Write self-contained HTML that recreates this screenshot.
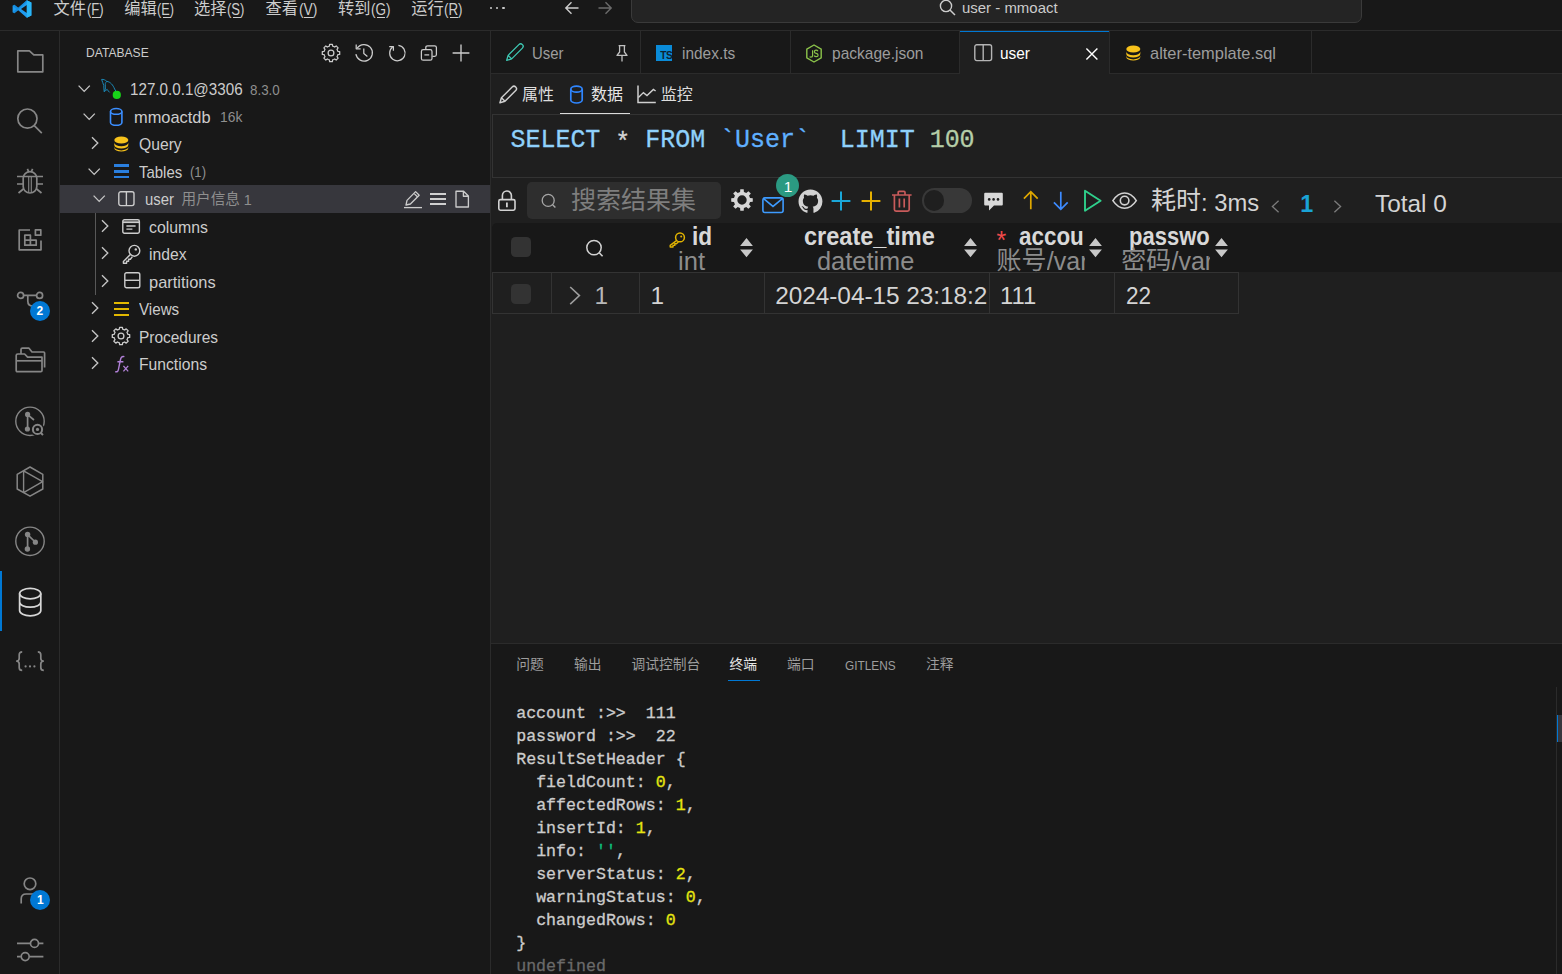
<!DOCTYPE html>
<html lang="zh-CN"><head><meta charset="utf-8"><title>user - mmoact - Visual Studio Code</title><style>
html,body{margin:0;padding:0;background:#181818;}
body{width:1562px;height:974px;overflow:hidden;position:relative;font-family:"Liberation Sans",sans-serif;color:#ccc;}
.t{position:absolute;white-space:pre;display:block;transform-origin:0 0;}
.m{font-family:"Liberation Mono",monospace;-webkit-text-stroke:.3px;}
.c{position:absolute;display:block;line-height:0;white-space:pre;font-family:"Liberation Sans","Noto Sans CJK SC",sans-serif;}
.r{position:absolute;}
.i{position:absolute;overflow:visible;}
</style></head><body>
<div class="r" style="left:0px;top:0px;width:1562px;height:30px;background:#181818;"></div>
<div class="r" style="left:0px;top:30px;width:1562px;height:1px;background:#2b2b2b;"></div>
<div class="r" style="left:0px;top:31px;width:59px;height:943px;background:#181818;"></div>
<div class="r" style="left:59px;top:31px;width:1px;height:943px;background:#2b2b2b;"></div>
<div class="r" style="left:60px;top:31px;width:430px;height:943px;background:#181818;"></div>
<div class="r" style="left:490px;top:31px;width:1px;height:943px;background:#2b2b2b;"></div>
<div class="r" style="left:491px;top:31px;width:1071px;height:42px;background:#181818;"></div>
<div class="r" style="left:491px;top:73px;width:1071px;height:1px;background:#2b2b2b;"></div>
<div class="r" style="left:491px;top:74px;width:1071px;height:569px;background:#1f1f1f;"></div>
<div class="r" style="left:491px;top:643px;width:1071px;height:1px;background:#2b2b2b;"></div>
<div class="r" style="left:491px;top:644px;width:1071px;height:330px;background:#181818;"></div>
<svg class="i" style="left:12px;top:-1.5px;" width="20" height="20" viewBox="0 0 20 20"><path d="M74 6 L97 17 V83 L74 94 L31 56 L12 71 L3 66 V34 L12 29 L31 44 Z M74 30 L45 50 L74 70 Z" transform="scale(.2)" fill="#1f9cf0"/>
<path d="M74 6 L97 17 V83 L74 94 Z" transform="scale(.2)" fill="#29b6f6"/>
<path d="M3 66 L12 71 L74 14 L74 6 L31 44 L12 29 L3 34 L22 50 Z" transform="scale(.2)" fill="#0d7fd0" opacity=".55"/></svg>
<span class="c" style="left:53.5px;top:-0.1px;font-size:16.25px;line-height:16.25px;color:#cccccc;">文件</span>
<span class="t " id="t1" style="left:86.5px;top:-1.63px;font-size:16.25px;line-height:22px;color:#cccccc;transform:scaleX(0.8048);">(F)</span>
<div class="r" style="left:92px;top:17.2px;width:8.5px;height:1px;background:#cccccc;"></div>
<span class="c" style="left:124.2px;top:-0.1px;font-size:16.25px;line-height:16.25px;color:#cccccc;">编辑</span>
<span class="t " id="t2" style="left:157.2px;top:-1.63px;font-size:16.25px;line-height:22px;color:#cccccc;transform:scaleX(0.7798);">(E)</span>
<div class="r" style="left:162.7px;top:17.2px;width:8.5px;height:1px;background:#cccccc;"></div>
<span class="c" style="left:194.1px;top:-0.1px;font-size:16.25px;line-height:16.25px;color:#cccccc;">选择</span>
<span class="t " id="t3" style="left:227.1px;top:-1.63px;font-size:16.25px;line-height:22px;color:#cccccc;transform:scaleX(0.8075);">(S)</span>
<div class="r" style="left:232.6px;top:17.2px;width:8.5px;height:1px;background:#cccccc;"></div>
<span class="c" style="left:265.6px;top:-0.1px;font-size:16.25px;line-height:16.25px;color:#cccccc;">查看</span>
<span class="t " id="t4" style="left:298.6px;top:-1.63px;font-size:16.25px;line-height:22px;color:#cccccc;transform:scaleX(0.8490);">(V)</span>
<div class="r" style="left:304.1px;top:17.2px;width:8.5px;height:1px;background:#cccccc;"></div>
<span class="c" style="left:338px;top:-0.1px;font-size:16.25px;line-height:16.25px;color:#cccccc;">转到</span>
<span class="t " id="t5" style="left:371px;top:-1.63px;font-size:16.25px;line-height:22px;color:#cccccc;transform:scaleX(0.8309);">(G)</span>
<div class="r" style="left:376.5px;top:17.2px;width:8.5px;height:1px;background:#cccccc;"></div>
<span class="c" style="left:411.2px;top:-0.1px;font-size:16.25px;line-height:16.25px;color:#cccccc;">运行</span>
<span class="t " id="t6" style="left:444.2px;top:-1.63px;font-size:16.25px;line-height:22px;color:#cccccc;transform:scaleX(0.8199);">(R)</span>
<div class="r" style="left:449.7px;top:17.2px;width:8.5px;height:1px;background:#cccccc;"></div>
<div class="r" style="left:490px;top:6.8px;width:2.2px;height:2.2px;background:#cccccc;border-radius:50%"></div>
<div class="r" style="left:496.2px;top:6.8px;width:2.2px;height:2.2px;background:#cccccc;border-radius:50%"></div>
<div class="r" style="left:502.4px;top:6.8px;width:2.2px;height:2.2px;background:#cccccc;border-radius:50%"></div>
<svg class="i" style="left:562px;top:-2px;" width="20" height="20" viewBox="0 0 20 20"><path d="M16.5 10 H4 M9.5 4.2 L3.8 10 L9.5 15.8" fill="none" stroke="#cccccc" stroke-width="1.4"/></svg>
<svg class="i" style="left:594.5px;top:-2px;" width="20" height="20" viewBox="0 0 20 20"><path d="M3.5 10 H16 M10.5 4.2 L16.2 10 L10.5 15.8" fill="none" stroke="#6b6b6b" stroke-width="1.4"/></svg>
<div class="r" style="left:630.5px;top:-8px;width:731px;height:30.5px;background:#242424;border:1px solid #3a3a3a;border-radius:7px;box-sizing:border-box"></div>
<svg class="i" style="left:937px;top:-3px;" width="20" height="20" viewBox="0 0 20 20"><circle cx="9" cy="9" r="5.6" fill="none" stroke="#cccccc" stroke-width="1.4"/><path d="M13 13 L18 18" stroke="#cccccc" stroke-width="1.5"/></svg>
<span class="t " id="t7" style="left:962.3px;top:-1.6px;font-size:15px;line-height:20px;color:#cccccc;transform:scaleX(0.9973);">user - mmoact</span>
<svg class="i" style="left:15px;top:45.5px;" width="30" height="30" viewBox="0 0 30 30"><g fill="none" stroke="#868686" stroke-width="1.7" stroke-linejoin="round" stroke-linecap="butt"><path d="M2.8 4.9 H14.4 L18.8 8.9 H27.8 V25.8 H2.8 Z"/></g></svg>
<svg class="i" style="left:15px;top:105.5px;" width="30" height="30" viewBox="0 0 30 30"><g fill="none" stroke="#868686" stroke-width="1.7" stroke-linejoin="round" stroke-linecap="butt"><circle cx="12.4" cy="12.6" r="9.6"/><path d="M19.3 19.6 L26.8 27.2"/></g></svg>
<svg class="i" style="left:15px;top:165.5px;" width="30" height="30" viewBox="0 0 30 30"><g fill="none" stroke="#868686" stroke-width="1.7" stroke-linejoin="round" stroke-linecap="butt"><path d="M8.2 12 a6.8 6.3 0 0 1 13.6 0 V20.5 a6.8 6.5 0 0 1 -13.6 0 Z"/><path d="M13.7 11 V26.6 M16.3 11 V26.6" stroke-width="1.1"/><path d="M2 10.5 H28 M2 18 H8 M22 18 H28 M3.5 27 L9 22.5 M26.5 27 L21 22.5 M12.4 2.8 L13.8 6 M17.6 2.8 L16.2 6"/></g></svg>
<svg class="i" style="left:15px;top:224.3px;" width="30" height="30" viewBox="0 0 30 30"><g fill="none" stroke="#868686" stroke-width="1.7" stroke-linejoin="round" stroke-linecap="butt"><path d="M15 6 H4.2 V25.8 H26 V16.4"/><path d="M9.8 11.2 H15.4 V21.2 H9.8 Z M9.8 16.2 H21.2 V21.2 H15.4"/><path d="M20.4 5.8 H25.8 V11.2 H20.4 Z"/></g></svg>
<svg class="i" style="left:15px;top:284.5px;" width="30" height="30" viewBox="0 0 30 30"><g fill="none" stroke="#868686" stroke-width="1.7" stroke-linejoin="round" stroke-linecap="butt"><circle cx="5.6" cy="10.4" r="3"/><circle cx="24.6" cy="10.4" r="3"/><path d="M8.6 10.4 H21.6 M12.8 10.4 V16 q0 5 5 5"/></g></svg>
<div class="r" style="left:30px;top:301px;width:20px;height:20px;background:#0078d4;border-radius:50%"></div>
<span class="t " id="t8" style="left:36.6px;top:303.24px;font-size:12px;line-height:16px;color:#ffffff;font-weight:700;">2</span>
<svg class="i" style="left:15px;top:344.1px;" width="30" height="30" viewBox="0 0 30 30"><g fill="none" stroke="#868686" stroke-width="1.7" stroke-linejoin="round" stroke-linecap="butt"><path d="M1.2 11.6 q0 -1.6 1.6 -1.6 H9.6 L12.6 13.2 H27 V26.4 q0 1.2 -1.2 1.2 H2.4 q-1.2 0 -1.2 -1.2 Z"/><path d="M1.2 16.8 H27"/><path d="M6 10 V5.6 q0 -1.4 1.4 -1.4 H14 L17 8 H28.6 q1 0 1 1 V23.6"/></g></svg>
<svg class="i" style="left:15px;top:405.5px;" width="30" height="30" viewBox="0 0 30 30"><g fill="none" stroke="#868686" stroke-width="1.7" stroke-linejoin="round" stroke-linecap="butt"><circle cx="15" cy="15.3" r="14.2" stroke-width="1.4"/><path d="M12.6 8.6 V23 M12.6 8.6 L19 14"/><circle cx="12.6" cy="8.4" r="2.6" fill="#868686" stroke="none"/><circle cx="12.4" cy="23" r="2.6" fill="#868686" stroke="none"/><circle cx="22.5" cy="23.4" r="7" fill="#181818" stroke="none"/><circle cx="22.5" cy="23.4" r="4.6" stroke-width="2"/><circle cx="22.5" cy="23.4" r="1.6" fill="#868686" stroke="none"/><path d="M25.6 26.8 L28 29" stroke-width="2"/></g></svg>
<svg class="i" style="left:15px;top:465.5px;" width="30" height="30" viewBox="0 0 30 30"><g fill="none" stroke="#868686" stroke-width="1.7" stroke-linejoin="round" stroke-linecap="butt"><path d="M15 1 L27.8 8.4 V23 L15 30.2 L2.2 23 V8.4 Z" stroke-width="1.5"/><path d="M8.6 5 V26.4 M8.6 4.8 L27.6 15.6 L8.6 26.6" stroke-width="1.4"/></g></svg>
<svg class="i" style="left:15px;top:525.5px;" width="30" height="30" viewBox="0 0 30 30"><g fill="none" stroke="#868686" stroke-width="1.7" stroke-linejoin="round" stroke-linecap="butt"><circle cx="15" cy="15.3" r="14.2" stroke-width="1.4"/><path d="M12.6 8.6 V23 M12.6 8.6 L20.2 16"/><circle cx="12.6" cy="8.4" r="2.7" fill="#868686" stroke="none"/><circle cx="12.4" cy="23" r="2.7" fill="#868686" stroke="none"/><circle cx="20.4" cy="16.2" r="2.6" fill="#868686" stroke="none"/></g></svg>
<div class="r" style="left:0px;top:570.5px;width:2.1px;height:60px;background:#0078d4;"></div>
<svg class="i" style="left:15px;top:585.5px;" width="30" height="30" viewBox="0 0 30 30"><g fill="none" stroke="#d7d7d7" stroke-width="1.7" stroke-linejoin="round" stroke-linecap="butt"><ellipse cx="15.2" cy="7.6" rx="10.6" ry="5.2"/><path d="M4.6 7.6 V24.6 a10.6 5.2 0 0 0 21.2 0 V7.6 M4.6 16 a10.6 5.2 0 0 0 21.2 0" /></g></svg>
<svg class="i" style="left:15px;top:645.5px;" width="30" height="30" viewBox="0 0 30 30"><g fill="none" stroke="#868686" stroke-width="1.7" stroke-linejoin="round" stroke-linecap="butt"><path d="M7.2 5.8 q-3 0 -3 3 v3.4 q0 2.6 -2.4 2.9 q2.4 .3 2.4 2.9 v3.4 q0 3 3 3 M22.8 5.8 q3 0 3 3 v3.4 q0 2.6 2.4 2.9 q-2.4 .3 -2.4 2.9 v3.4 q0 3 3 3" transform="translate(0 0)"/><circle cx="10.6" cy="20.4" r="1.1" fill="#868686" stroke="none"/><circle cx="15" cy="20.4" r="1.1" fill="#868686" stroke="none"/><circle cx="19.4" cy="20.4" r="1.1" fill="#868686" stroke="none"/></g></svg>
<svg class="i" style="left:15px;top:875.5px;" width="30" height="30" viewBox="0 0 30 30"><g fill="none" stroke="#868686" stroke-width="1.7" stroke-linejoin="round" stroke-linecap="butt"><circle cx="15" cy="7.8" r="5.8"/><path d="M6.2 27.6 V23 q0 -5 5 -5 H19"/></g></svg>
<div class="r" style="left:30px;top:890px;width:20px;height:20px;background:#0078d4;border-radius:50%"></div>
<span class="t " id="t9" style="left:37px;top:892.14px;font-size:12px;line-height:16px;color:#ffffff;font-weight:700;">1</span>
<svg class="i" style="left:15px;top:935px;" width="30" height="30" viewBox="0 0 30 30"><g fill="none" stroke="#868686" stroke-width="1.7" stroke-linejoin="round" stroke-linecap="butt"><path d="M2 8.4 H15.2 M23.8 8.4 H28.4 M2 21.6 H5.8 M14.6 21.6 H28.4"/><circle cx="19.5" cy="8.4" r="4"/><circle cx="10.2" cy="21.6" r="4"/></g></svg>
<span class="t " id="t10" style="left:85.6px;top:44.26px;font-size:13.4px;line-height:18px;color:#cccccc;transform:scaleX(0.9028);">DATABASE</span>
<svg class="i" style="left:321.4px;top:42.8px;" width="20" height="20" viewBox="0 0 20 20"><g fill="none" stroke="#cccccc" stroke-width="1.25" stroke-linejoin="round"><path d="M7.32 3.53 L8.37 3.19 L8.62 1.31 L11.38 1.31 L11.63 3.19 L12.68 3.53 L13.66 4.03 L15.17 2.88 L17.12 4.83 L15.97 6.34 L16.47 7.32 L16.81 8.37 L18.69 8.62 L18.69 11.38 L16.81 11.63 L16.47 12.68 L15.97 13.66 L17.12 15.17 L15.17 17.12 L13.66 15.97 L12.68 16.47 L11.63 16.81 L11.38 18.69 L8.62 18.69 L8.37 16.81 L7.32 16.47 L6.34 15.97 L4.83 17.12 L2.88 15.17 L4.03 13.66 L3.53 12.68 L3.19 11.63 L1.31 11.38 L1.31 8.62 L3.19 8.37 L3.53 7.32 L4.03 6.34 L2.88 4.83 L4.83 2.88 L6.34 4.03 Z"/><circle cx="10" cy="10" r="2.9"/></g></svg>
<svg class="i" style="left:353.9px;top:42.8px;" width="20" height="20" viewBox="0 0 20 20"><g fill="none" stroke="#cccccc" stroke-width="1.25" stroke-linejoin="round"><path d="M3.2 5.2 A8.3 8.3 0 1 1 1.9 11.2"/><path d="M2.2 1.6 V5.8 H6.6"/><path d="M9.8 5.4 V10.6 L13.4 13.6"/></g></svg>
<svg class="i" style="left:386.5px;top:42.8px;" width="20" height="20" viewBox="0 0 20 20"><g fill="none" stroke="#cccccc" stroke-width="1.25" stroke-linejoin="round"><path d="M5.6 4 A7.7 7.7 0 1 0 11.4 2.4"/><path d="M2.2 3.6 H6.4 V7.8" /></g></svg>
<svg class="i" style="left:419px;top:42.8px;" width="20" height="20" viewBox="0 0 20 20"><g fill="none" stroke="#cccccc" stroke-width="1.25" stroke-linejoin="round"><rect x="2.4" y="6.6" width="10.6" height="10.6" rx="1.8"/><path d="M5.4 11.9 H10.2"/><path d="M6.8 6.4 V4.6 q0 -1.8 1.8 -1.8 H15.6 q1.8 0 1.8 1.8 V11.6 q0 1.8 -1.8 1.8 H13.4"/></g></svg>
<svg class="i" style="left:451px;top:42.8px;" width="20" height="20" viewBox="0 0 20 20"><g fill="none" stroke="#cccccc" stroke-width="1.35" stroke-linejoin="round"><path d="M10 1.6 V18.4 M1.6 10 H18.4"/></g></svg>
<div class="r" style="left:60px;top:185.25px;width:430px;height:27.5px;background:#37373d;"></div>
<div class="r" style="left:95px;top:213px;width:1px;height:82px;background:#585858;"></div>
<svg class="i" style="left:78px;top:83px;" width="13" height="12" viewBox="0 0 13 12"><path d="M0.6 2.6 L6.2 8.4 L11.8 2.6" fill="none" stroke="#c5c5c5" stroke-width="1.35"/></svg>
<svg class="i" style="left:100px;top:78px;" width="22" height="22" viewBox="0 0 22 22"><path d="M1.6 1.4 C3.6 1.2 5.4 2 6.8 3.4 C10.4 3.8 13 7 14.6 11 C15.4 12.8 16.6 14 17.6 15.6 M6.8 3.4 C5.2 4.4 5 6.4 5.4 8.2 C5.8 10.4 5 12 4.2 13.6 M1.6 1.4 C2 3.6 3.4 5.2 3.8 7.6 C4.2 10 3.6 12 4.2 13.6 C5.4 13 6.2 11.8 7.2 11.4 C8 12.4 8.6 13.6 9.6 14.4" fill="none" stroke="#1b87b5" stroke-width="1"/><circle cx="16.8" cy="16.9" r="4.1" fill="#18d418"/></svg>
<span class="t " id="t11" style="left:129.7px;top:79.12px;font-size:16.1px;line-height:21px;color:#cccccc;transform:scaleX(0.9441);">127.0.0.1@3306</span>
<span class="t " id="t12" style="left:249.9px;top:80.71px;font-size:14.4px;line-height:19px;color:#8f8f8f;transform:scaleX(0.9308);">8.3.0</span>
<svg class="i" style="left:83px;top:110.5px;" width="13" height="12" viewBox="0 0 13 12"><path d="M0.6 2.6 L6.2 8.4 L11.8 2.6" fill="none" stroke="#c5c5c5" stroke-width="1.35"/></svg>
<svg class="i" style="left:108px;top:106.5px;" width="16" height="20" viewBox="0 0 16 20"><ellipse cx="8.2" cy="4.4" rx="5.7" ry="2.9" fill="none" stroke="#3b8eff" stroke-width="1.6"/><path d="M2.5 4.4 V15.4 a5.7 2.9 0 0 0 11.4 0 V4.4" fill="none" stroke="#3b8eff" stroke-width="1.6"/></svg>
<span class="t " id="t13" style="left:134.4px;top:106.62px;font-size:16.1px;line-height:21px;color:#cccccc;transform:scaleX(1.0194);">mmoactdb</span>
<span class="t " id="t14" style="left:220px;top:108.21px;font-size:14.4px;line-height:19px;color:#8f8f8f;transform:scaleX(0.9611);">16k</span>
<svg class="i" style="left:91.3px;top:136.4px;" width="9" height="14" viewBox="0 0 9 14"><path d="M1 1.2 L6.8 7 L1 12.8" fill="none" stroke="#c5c5c5" stroke-width="1.35"/></svg>
<svg class="i" style="left:113.7px;top:136.3px;" width="15" height="16" viewBox="0 0 15 16"><ellipse cx="7.3" cy="4" rx="7" ry="3.6" fill="#f7c21b"/><path d="M0.3 6.6 a7 3.6 0 0 0 14 0 V9 a7 3.6 0 0 1 -14 0 Z M0.3 10.8 a7 3.6 0 0 0 14 0 V12 a7 3.6 0 0 1 -14 0 Z" fill="#f7c21b"/></svg>
<span class="t " id="t15" style="left:138.8px;top:134.12px;font-size:16.1px;line-height:21px;color:#cccccc;transform:scaleX(0.9743);">Query</span>
<svg class="i" style="left:88px;top:165.5px;" width="13" height="12" viewBox="0 0 13 12"><path d="M0.6 2.6 L6.2 8.4 L11.8 2.6" fill="none" stroke="#c5c5c5" stroke-width="1.35"/></svg>
<div class="r" style="left:113.6px;top:164.15px;width:15.6px;height:2.5px;background:#2a7fde;"></div>
<div class="r" style="left:113.6px;top:170.05px;width:15.6px;height:2.5px;background:#2a7fde;"></div>
<div class="r" style="left:113.6px;top:175.95px;width:15.6px;height:2.5px;background:#2a7fde;"></div>
<span class="t " id="t16" style="left:138.8px;top:161.62px;font-size:16.1px;line-height:21px;color:#cccccc;transform:scaleX(0.9284);">Tables</span>
<span class="t " id="t17" style="left:190px;top:163.21px;font-size:14.4px;line-height:19px;color:#8f8f8f;transform:scaleX(0.9094);">(1)</span>
<svg class="i" style="left:92.7px;top:193px;" width="13" height="12" viewBox="0 0 13 12"><path d="M0.6 2.6 L6.2 8.4 L11.8 2.6" fill="none" stroke="#c5c5c5" stroke-width="1.35"/></svg>
<svg class="i" style="left:118.4px;top:190.6px;" width="16.8" height="15.4" viewBox="0 0 16.8 15.4"><rect x=".8" y=".8" width="15.2" height="13.8" rx="2" fill="none" stroke="#cccccc" stroke-width="1.4"/><path d="M8.4 1 V14.4" stroke="#cccccc" stroke-width="1.4"/></svg>
<span class="t " id="t18" style="left:144.5px;top:189.12px;font-size:16.1px;line-height:21px;color:#cccccc;transform:scaleX(0.9261);">user</span>
<span class="c" style="left:181.5px;top:192px;font-size:14.6px;line-height:14.6px;color:#8f8f8f;">用户信息</span>
<span class="t " id="t19" style="left:243.8px;top:190.71px;font-size:14.4px;line-height:19px;color:#8f8f8f;">1</span>
<svg class="i" style="left:402.5px;top:188.7px;" width="20" height="20" viewBox="0 0 20 20"><g fill="none" stroke="#cccccc" stroke-width="1.3" stroke-linejoin="round"><path d="M12.6 2.6 L16.2 6.2 L7.4 15 L3 16 L4 11.4 Z M11 4.4 L14.4 7.8"/><path d="M1 18.6 H19"/></g></svg>
<div class="r" style="left:429.7px;top:192.5px;width:16.2px;height:2px;background:#d0d0d0;"></div>
<div class="r" style="left:429.7px;top:197.7px;width:16.2px;height:2px;background:#d0d0d0;"></div>
<div class="r" style="left:429.7px;top:202.9px;width:16.2px;height:2px;background:#d0d0d0;"></div>
<svg class="i" style="left:452.4px;top:188.7px;" width="20" height="20" viewBox="0 0 20 20"><g fill="none" stroke="#cccccc" stroke-width="1.35" stroke-linejoin="round"><path d="M4 2.2 H11.6 L16.4 7 V18 H4 Z M11.4 2.4 V7.2 H16.2"/></g></svg>
<svg class="i" style="left:100.8px;top:218.9px;" width="9" height="14" viewBox="0 0 9 14"><path d="M1 1.2 L6.8 7 L1 12.8" fill="none" stroke="#c5c5c5" stroke-width="1.35"/></svg>
<svg class="i" style="left:122.4px;top:218.8px;" width="18.2" height="15" viewBox="0 0 18.2 15"><rect x=".8" y=".8" width="16.6" height="13.4" rx="1.6" fill="none" stroke="#cccccc" stroke-width="1.4"/><path d="M1 3.2 H17.2" stroke="#cccccc" stroke-width="1.8"/><path d="M4.4 7 H13.6 M4.4 10.2 H10.4" stroke="#cccccc" stroke-width="1.3"/></svg>
<span class="t " id="t20" style="left:149.4px;top:216.62px;font-size:16.1px;line-height:21px;color:#cccccc;transform:scaleX(0.9844);">columns</span>
<svg class="i" style="left:100.8px;top:246.4px;" width="9" height="14" viewBox="0 0 9 14"><path d="M1 1.2 L6.8 7 L1 12.8" fill="none" stroke="#c5c5c5" stroke-width="1.35"/></svg>
<svg class="i" style="left:121.6px;top:244px;" width="19" height="20" viewBox="0 0 19 20"><circle cx="12.4" cy="6.8" r="5.4" fill="none" stroke="#cccccc" stroke-width="1.4"/><circle cx="13.8" cy="5.4" r="1.2" fill="#cccccc"/><path d="M8.4 10.4 L1.4 17.4 V19.2 H4.6 V17.2 H6.6 V15.2 H8.4 L10.4 12.6" fill="none" stroke="#cccccc" stroke-width="1.4" stroke-linejoin="round"/></svg>
<span class="t " id="t21" style="left:149.4px;top:244.12px;font-size:16.1px;line-height:21px;color:#cccccc;transform:scaleX(0.9770);">index</span>
<svg class="i" style="left:100.8px;top:273.9px;" width="9" height="14" viewBox="0 0 9 14"><path d="M1 1.2 L6.8 7 L1 12.8" fill="none" stroke="#c5c5c5" stroke-width="1.35"/></svg>
<svg class="i" style="left:123.8px;top:272.2px;" width="16.6" height="16.6" viewBox="0 0 16.6 16.6"><rect x=".8" y=".8" width="15" height="15" rx="1.8" fill="none" stroke="#cccccc" stroke-width="1.4"/><path d="M1 8.3 H15.6" stroke="#cccccc" stroke-width="1.4"/></svg>
<span class="t " id="t22" style="left:149.4px;top:271.62px;font-size:16.1px;line-height:21px;color:#cccccc;transform:scaleX(1.0197);">partitions</span>
<svg class="i" style="left:91px;top:301.4px;" width="9" height="14" viewBox="0 0 9 14"><path d="M1 1.2 L6.8 7 L1 12.8" fill="none" stroke="#c5c5c5" stroke-width="1.35"/></svg>
<div class="r" style="left:113.6px;top:301.85px;width:15.6px;height:2.5px;background:#e2b800;"></div>
<div class="r" style="left:113.6px;top:307.75px;width:15.6px;height:2.5px;background:#e2b800;"></div>
<div class="r" style="left:113.6px;top:313.65px;width:15.6px;height:2.5px;background:#e2b800;"></div>
<span class="t " id="t23" style="left:139px;top:299.12px;font-size:16.1px;line-height:21px;color:#cccccc;transform:scaleX(0.9428);">Views</span>
<svg class="i" style="left:91px;top:328.9px;" width="9" height="14" viewBox="0 0 9 14"><path d="M1 1.2 L6.8 7 L1 12.8" fill="none" stroke="#c5c5c5" stroke-width="1.35"/></svg>
<svg class="i" style="left:111.4px;top:326.1px;" width="20" height="20" viewBox="0 0 20 20"><g fill="none" stroke="#cccccc" stroke-width="1.3" stroke-linejoin="round"><path d="M7.32 3.53 L8.37 3.19 L8.62 1.31 L11.38 1.31 L11.63 3.19 L12.68 3.53 L13.66 4.03 L15.17 2.88 L17.12 4.83 L15.97 6.34 L16.47 7.32 L16.81 8.37 L18.69 8.62 L18.69 11.38 L16.81 11.63 L16.47 12.68 L15.97 13.66 L17.12 15.17 L15.17 17.12 L13.66 15.97 L12.68 16.47 L11.63 16.81 L11.38 18.69 L8.62 18.69 L8.37 16.81 L7.32 16.47 L6.34 15.97 L4.83 17.12 L2.88 15.17 L4.03 13.66 L3.53 12.68 L3.19 11.63 L1.31 11.38 L1.31 8.62 L3.19 8.37 L3.53 7.32 L4.03 6.34 L2.88 4.83 L4.83 2.88 L6.34 4.03 Z"/><circle cx="10" cy="10" r="2.9"/></g></svg>
<span class="t " id="t24" style="left:139px;top:326.62px;font-size:16.1px;line-height:21px;color:#cccccc;transform:scaleX(0.9598);">Procedures</span>
<svg class="i" style="left:91px;top:356.4px;" width="9" height="14" viewBox="0 0 9 14"><path d="M1 1.2 L6.8 7 L1 12.8" fill="none" stroke="#c5c5c5" stroke-width="1.35"/></svg>
<svg class="i" style="left:113.6px;top:355px;" width="16" height="18" viewBox="0 0 16 18"><path d="M10.4 1.6 C7.6 .8 6.8 2.8 6.4 5 L4.4 14.6 C4 16.6 3 17.2 1.2 16.6 M3.4 6.8 H9.4" fill="none" stroke="#b180d7" stroke-width="1.4"/><path d="M9.4 10.8 L14.2 16.4 M14.2 10.8 L9.4 16.4" stroke="#b180d7" stroke-width="1.3"/></svg>
<span class="t " id="t25" style="left:139px;top:354.12px;font-size:16.1px;line-height:21px;color:#cccccc;transform:scaleX(0.9745);">Functions</span>
<div class="r" style="left:640px;top:31px;width:1px;height:42px;background:#2b2b2b;"></div>
<div class="r" style="left:790px;top:31px;width:1px;height:42px;background:#2b2b2b;"></div>
<div class="r" style="left:959.2px;top:31px;width:1px;height:42px;background:#2b2b2b;"></div>
<div class="r" style="left:1109.2px;top:31px;width:1px;height:42px;background:#2b2b2b;"></div>
<div class="r" style="left:1311px;top:31px;width:1px;height:42px;background:#2b2b2b;"></div>
<div class="r" style="left:960px;top:31px;width:149.2px;height:43px;background:#1f1f1f;"></div>
<div class="r" style="left:960px;top:31px;width:149.2px;height:1.3px;background:#0078d4;"></div>
<svg class="i" style="left:505px;top:43.4px;" width="19" height="19" viewBox="0 0 19 19"><g transform="translate(9.7 9.3) rotate(-45)" fill="none" stroke="#3ec9b4" stroke-width="1.3" stroke-linejoin="round"><path d="M-11.4 0 L-6.8 -2.5 H8.4 a2.5 2.5 0 0 1 0 5 H-6.8 Z M-6.8 -2.5 V2.5"/></g></svg>
<span class="t " id="t26" style="left:531.9px;top:42.72px;font-size:16.1px;line-height:21px;color:#9d9d9d;transform:scaleX(0.9269);">User</span>
<svg class="i" style="left:614px;top:44px;" width="16" height="19" viewBox="0 0 16 19"><path d="M4.6 1.6 H11.4 M5.6 1.8 V8 L3 11.4 H13 L10.4 8 V1.8 M8 11.6 V17.6" fill="none" stroke="#c0c0c0" stroke-width="1.3" stroke-linejoin="round"/></svg>
<div class="r" style="left:656.3px;top:45px;width:16.2px;height:16px;background:#0a8bd8;"></div>
<span class="t " id="t27" style="left:660.2px;top:48.57px;font-size:10.2px;line-height:14px;color:#0e2230;font-weight:700;letter-spacing:-.35px">TS</span>
<span class="t " id="t28" style="left:682.3px;top:42.72px;font-size:16.1px;line-height:21px;color:#9d9d9d;transform:scaleX(0.9591);">index.ts</span>
<svg class="i" style="left:805.4px;top:43.6px;" width="18" height="19" viewBox="0 0 18 19"><path d="M9 1 L16.2 5.2 V13.8 L9 18 L1.8 13.8 V5.2 Z" fill="none" stroke="#8bc34a" stroke-width="1.4" stroke-linejoin="round"/><path d="M7.6 6.2 V11.6 q0 1.6 -1.6 1.6 q-.9 0 -1.4 -.6" fill="none" stroke="#8bc34a" stroke-width="1.2"/><path d="M13 7.2 q-.6 -1 -2 -1 q-1.6 0 -1.6 1.5 q0 1.3 1.8 1.7 q1.9 .4 1.9 1.8 q0 1.5 -1.9 1.5 q-1.4 0 -2.1 -1" fill="none" stroke="#8bc34a" stroke-width="1.2"/></svg>
<span class="t " id="t29" style="left:832px;top:42.72px;font-size:16.1px;line-height:21px;color:#9d9d9d;transform:scaleX(0.9637);">package.json</span>
<svg class="i" style="left:973.8px;top:44.2px;" width="18.4" height="17.4" viewBox="0 0 18.4 17.4"><rect x=".8" y=".8" width="16.8" height="15.8" rx="2" fill="none" stroke="#b4b4b4" stroke-width="1.4"/><path d="M9.2 1 V16.4" stroke="#b4b4b4" stroke-width="1.4"/></svg>
<span class="t " id="t30" style="left:1000.2px;top:42.72px;font-size:16.1px;line-height:21px;color:#ffffff;transform:scaleX(0.9581);">user</span>
<svg class="i" style="left:1085px;top:47px;" width="14" height="14" viewBox="0 0 14 14"><path d="M1.4 1.4 L12.4 12.4 M12.4 1.4 L1.4 12.4" stroke="#ffffff" stroke-width="1.4"/></svg>
<svg class="i" style="left:1125.6px;top:45px;" width="15" height="16" viewBox="0 0 15 16"><ellipse cx="7.3" cy="4" rx="7" ry="3.6" fill="#f7c21b"/><path d="M0.3 6.6 a7 3.6 0 0 0 14 0 V9 a7 3.6 0 0 1 -14 0 Z M0.3 10.8 a7 3.6 0 0 0 14 0 V12 a7 3.6 0 0 1 -14 0 Z" fill="#f7c21b"/></svg>
<span class="t " id="t31" style="left:1150px;top:42.72px;font-size:16.1px;line-height:21px;color:#9d9d9d;transform:scaleX(1.0206);">alter-template.sql</span>
<svg class="i" style="left:497.6px;top:85.4px;" width="20" height="20" viewBox="0 0 20 20"><g transform="translate(10 9.7) rotate(-45)" fill="none" stroke="#d0d0d0" stroke-width="1.45" stroke-linejoin="round"><path d="M-11.4 0 L-6.8 -2.5 H8.4 a2.5 2.5 0 0 1 0 5 H-6.8 Z M-6.8 -2.5 V2.5"/></g></svg>
<span class="c" style="left:522.1px;top:87px;font-size:16px;line-height:16px;color:#dddddd;">属性</span>
<svg class="i" style="left:569px;top:85.4px;" width="15" height="19.4" viewBox="0 0 15 19.4"><ellipse cx="7.5" cy="4.2" rx="5.7" ry="3" fill="none" stroke="#2f86ff" stroke-width="1.7"/><path d="M1.8 4.2 V15 a5.7 3 0 0 0 11.4 0 V4.2" fill="none" stroke="#2f86ff" stroke-width="1.7"/></svg>
<span class="c" style="left:591.1px;top:87px;font-size:16px;line-height:16px;color:#e6e6e6;">数据</span>
<svg class="i" style="left:637.4px;top:84.8px;" width="20" height="19" viewBox="0 0 20 19"><path d="M1 .4 V17.6 H18.8" fill="none" stroke="#d0d0d0" stroke-width="1.5"/><path d="M1.4 12.4 L6.4 7.6 L10 10.6 L16.4 4.4 L18.6 6" fill="none" stroke="#d0d0d0" stroke-width="1.4"/></svg>
<span class="c" style="left:660.8px;top:87px;font-size:16px;line-height:16px;color:#dddddd;">监控</span>
<div class="r" style="left:491.5px;top:114.3px;width:1070.5px;height:1px;background:#333333;"></div>
<div class="r" style="left:560px;top:112.6px;width:70.2px;height:1.7px;background:#dadada;"></div>
<div class="r" style="left:491.5px;top:114.3px;width:1px;height:63px;background:#333333;"></div>
<div class="r" style="left:491.5px;top:176.7px;width:1070.5px;height:1px;background:#333333;"></div>
<span class="t  m" id="t32" style="left:510.5px;top:123.64px;font-size:25px;line-height:33px;color:#8fd1fb;letter-spacing:-0.03px">SELECT</span>
<span class="t  m" id="t33" style="left:615.29px;top:126.84px;font-size:25px;line-height:33px;color:#d4d4d4;">*</span>
<span class="t  m" id="t34" style="left:645.23px;top:123.64px;font-size:25px;line-height:33px;color:#8fd1fb;letter-spacing:-0.03px">FROM</span>
<span class="t  m" id="t35" style="left:720.08px;top:123.64px;font-size:25px;line-height:33px;color:#5fb0ff;letter-spacing:-0.03px">`User`</span>
<span class="t  m" id="t36" style="left:839.84px;top:123.64px;font-size:25px;line-height:33px;color:#8fd1fb;letter-spacing:-0.03px">LIMIT</span>
<span class="t  m" id="t37" style="left:929.66px;top:123.64px;font-size:25px;line-height:33px;color:#b5cea8;letter-spacing:-0.03px">100</span>
<svg class="i" style="left:497px;top:189px;" width="20" height="23" viewBox="0 0 20 23"><rect x="1.8" y="10.6" width="16.2" height="10.6" rx="1.6" fill="none" stroke="#d2d2d2" stroke-width="1.6"/><path d="M5.4 10.4 V6.6 a4.5 4.6 0 0 1 9 0 V10.4" fill="none" stroke="#d2d2d2" stroke-width="1.6"/><path d="M9.9 13.6 V18.2" stroke="#d2d2d2" stroke-width="1.8"/></svg>
<div class="r" style="left:527px;top:182px;width:194px;height:37px;background:#2e2e2e;border-radius:5px"></div>
<svg class="i" style="left:540px;top:192px;" width="18" height="18" viewBox="0 0 18 18"><circle cx="8.2" cy="8.4" r="6" fill="none" stroke="#a6a6a6" stroke-width="1.3"/><path d="M12.6 12.8 L15.4 15.6" stroke="#a6a6a6" stroke-width="1.4"/></svg>
<span class="c" style="left:571px;top:187.8px;font-size:25px;line-height:25px;color:#7e7e7e;">搜索结果集</span>
<svg class="i" style="left:729.8px;top:188.3px;" width="24" height="24" viewBox="0 0 24 24"><path d="M8.86 4.42 L10.09 4.03 L10.29 1.23 L13.71 1.23 L13.91 4.03 L15.14 4.42 L16.28 5.01 L18.41 3.18 L20.82 5.59 L18.99 7.72 L19.58 8.86 L19.97 10.09 L22.77 10.29 L22.77 13.71 L19.97 13.91 L19.58 15.14 L18.99 16.28 L20.82 18.41 L18.41 20.82 L16.28 18.99 L15.14 19.58 L13.91 19.97 L13.71 22.77 L10.29 22.77 L10.09 19.97 L8.86 19.58 L7.72 18.99 L5.59 20.82 L3.18 18.41 L5.01 16.28 L4.42 15.14 L4.03 13.91 L1.23 13.71 L1.23 10.29 L4.03 10.09 L4.42 8.86 L5.01 7.72 L3.18 5.59 L5.59 3.18 L7.72 5.01 Z M7.30 12.00 a4.70 4.70 0 1 0 9.40 0 a4.70 4.70 0 1 0 -9.40 0 Z" fill="#d6d6d6" fill-rule="evenodd"/></svg>
<svg class="i" style="left:761.6px;top:196.6px;" width="23" height="17" viewBox="0 0 23 17"><rect x=".9" y=".9" width="20.2" height="14.6" rx="2" fill="none" stroke="#3d9bff" stroke-width="1.6"/><path d="M1.6 1.6 L11 9.4 L20.4 1.6" fill="none" stroke="#3d9bff" stroke-width="1.6"/></svg>
<div class="r" style="left:776.2px;top:173.9px;width:23px;height:23px;background:#2b9a82;border-radius:50%"></div>
<span class="t " id="t38" style="left:783.8px;top:175.63px;font-size:15.5px;line-height:21px;color:#ffffff;">1</span>
<svg class="i" style="left:798.2px;top:188.6px;" width="25" height="25" viewBox="0 0 25 25"><path fill="#d2d2d2" fill-rule="evenodd" d="M12 .5C5.65.5.5 5.65.5 12c0 5.08 3.29 9.39 7.86 10.91.57.1.79-.25.79-.55 0-.27-.01-1.18-.02-2.13-3.2.7-3.87-1.36-3.87-1.36-.52-1.33-1.28-1.68-1.28-1.68-1.04-.71.08-.7.08-.7 1.16.08 1.76 1.19 1.76 1.19 1.03 1.76 2.69 1.25 3.35.96.1-.74.4-1.25.73-1.54-2.55-.29-5.24-1.28-5.24-5.69 0-1.26.45-2.28 1.19-3.09-.12-.29-.52-1.46.11-3.05 0 0 .97-.31 3.17 1.18a11 11 0 0 1 5.76 0c2.2-1.49 3.16-1.18 3.16-1.18.63 1.59.23 2.76.11 3.05.74.81 1.19 1.83 1.19 3.09 0 4.42-2.69 5.39-5.26 5.68.41.36.78 1.06.78 2.14 0 1.54-.01 2.79-.01 3.17 0 .31.21.66.79.55A11.51 11.51 0 0 0 23.5 12C23.5 5.65 18.35.5 12 .5z" transform="scale(1.04)"/></svg>
<svg class="i" style="left:830.7px;top:190.6px;" width="20" height="20" viewBox="0 0 20 20"><path d="M10 .6 V19.4 M.6 10 H19.4" stroke="#1aa7d9" stroke-width="2"/></svg>
<svg class="i" style="left:860.6px;top:190.6px;" width="20" height="20" viewBox="0 0 20 20"><path d="M10 .6 V19.4 M.6 10 H19.4" stroke="#e6b000" stroke-width="2"/></svg>
<svg class="i" style="left:891px;top:189.6px;" width="22" height="23" viewBox="0 0 22 23"><path d="M1 5 H20.6 M7.2 4.8 V2.4 q0 -1 1 -1 H13 q1 0 1 1 V4.8 M3.4 5.2 V19.6 q0 1.6 1.6 1.6 H16.6 q1.6 0 1.6 -1.6 V5.2" fill="none" stroke="#c85b5b" stroke-width="1.7"/><path d="M8.4 8.6 V17.4 M13.2 8.6 V17.4" stroke="#c85b5b" stroke-width="1.7"/></svg>
<div class="r" style="left:921.6px;top:188.2px;width:50.4px;height:24.6px;background:#383838;border-radius:12.3px"></div>
<div class="r" style="left:923.8px;top:190.4px;width:20.2px;height:20.2px;background:#1f1f1f;border-radius:50%"></div>
<svg class="i" style="left:983.6px;top:191.6px;" width="20" height="20" viewBox="0 0 20 20"><path d="M1.2 .8 H17.8 q1 0 1 1 V12.6 q0 1 -1 1 H10 L5 18.4 V13.6 H1.2 q-1 0 -1 -1 V1.8 q0 -1 1 -1 Z" fill="#d8d8d8"/><circle cx="5.2" cy="7.4" r="1.3" fill="#1f1f1f"/><circle cx="9.6" cy="7.4" r="1.3" fill="#1f1f1f"/><circle cx="14" cy="7.4" r="1.3" fill="#1f1f1f"/></svg>
<svg class="i" style="left:1021.6px;top:190px;" width="18" height="20" viewBox="0 0 18 20"><path d="M8.8 19.2 V1.8 M1.9 8.6 L8.8 1.7 L15.7 8.6" fill="none" stroke="#e0a800" stroke-width="1.7"/></svg>
<svg class="i" style="left:1051.6px;top:191.4px;" width="18" height="20" viewBox="0 0 18 20"><path d="M8.8 .8 V18.2 M1.9 11.4 L8.8 18.3 L15.7 11.4" fill="none" stroke="#3d8bff" stroke-width="1.7"/></svg>
<svg class="i" style="left:1083px;top:189px;" width="20" height="24" viewBox="0 0 20 24"><path d="M2 1.8 L17.6 11.8 L2 21.8 Z" fill="none" stroke="#2fd08c" stroke-width="1.9" stroke-linejoin="round"/></svg>
<svg class="i" style="left:1111.8px;top:192.4px;" width="26" height="19" viewBox="0 0 26 19"><path d="M.9 8.6 C5 2.4 9.2 1 12.6 1 C16 1 20.2 2.4 24.3 8.6 C20.2 14.8 16 16.2 12.6 16.2 C9.2 16.2 5 14.8 .9 8.6 Z" fill="none" stroke="#d2d2d2" stroke-width="1.6"/><circle cx="12.6" cy="8.6" r="4.3" fill="none" stroke="#d2d2d2" stroke-width="1.6"/></svg>
<span class="c" style="left:1151px;top:187.8px;font-size:25px;line-height:25px;color:#d4d4d4;">耗时</span>
<span class="t " id="t39" style="left:1200.5px;top:187.28px;font-size:24.6px;line-height:32px;color:#d4d4d4;transform:scaleX(0.9661);">: 3ms</span>
<svg class="i" style="left:1270.6px;top:200px;" width="9" height="13" viewBox="0 0 9 13"><path d="M7.6 .8 L1.4 6.5 L7.6 12.2" fill="none" stroke="#7c7c7c" stroke-width="1.3"/></svg>
<span class="t " id="t40" style="left:1300.2px;top:188.69px;font-size:23.4px;line-height:31px;color:#1aa3d6;font-weight:700;">1</span>
<svg class="i" style="left:1333.4px;top:200px;" width="9" height="13" viewBox="0 0 9 13"><path d="M1.4 .8 L7.6 6.5 L1.4 12.2" fill="none" stroke="#7c7c7c" stroke-width="1.3"/></svg>
<span class="t " id="t41" style="left:1374.5px;top:188.28px;font-size:24.6px;line-height:32px;color:#d4d4d4;transform:scaleX(0.9908);">Total 0</span>
<div class="r" style="left:492px;top:222.7px;width:1070px;height:49.7px;background:#181818;border-top-left-radius:5px"></div>
<div class="r" style="left:511px;top:237px;width:20px;height:20px;background:#333333;border-radius:4.5px"></div>
<svg class="i" style="left:584px;top:238px;" width="22" height="22" viewBox="0 0 22 22"><circle cx="10" cy="9.6" r="7.2" fill="none" stroke="#d2d2d2" stroke-width="1.5"/><path d="M15.2 14.8 L18.6 18.2" stroke="#d2d2d2" stroke-width="1.6"/></svg>
<svg class="i" style="left:668.6px;top:232.4px;" width="17" height="16" viewBox="0 0 17 16"><circle cx="11" cy="5.4" r="4.4" fill="none" stroke="#e2b400" stroke-width="1.5"/><circle cx="12.2" cy="4.4" r="1" fill="#e2b400"/><path d="M7.8 8.4 L1.2 13.4 V15 H4 V13.4 H5.8 V11.8 H7.4 L9.4 10" fill="none" stroke="#e2b400" stroke-width="1.4" stroke-linejoin="round"/></svg>
<span class="t " id="t42" style="left:692.4px;top:220.24px;font-size:25px;line-height:33px;color:#d8d8d8;font-weight:700;transform:scaleX(0.9046);">id</span>
<span class="t " id="t43" style="left:678px;top:244.94px;font-size:25px;line-height:33px;color:#8c8c8c;transform:scaleX(1.0225);">int</span>
<svg class="i" style="left:739.6px;top:237.8px;" width="13" height="20" viewBox="0 0 13 20"><path d="M6.5 0 L12.9 8 H.1 Z M.1 11.4 H12.9 L6.5 19.2 Z" fill="#c8c8c8"/></svg>
<span class="t " id="t44" style="left:803.5px;top:220.24px;font-size:25px;line-height:33px;color:#d8d8d8;font-weight:700;transform:scaleX(0.9411);">create_time</span>
<span class="t " id="t45" style="left:817px;top:244.94px;font-size:25px;line-height:33px;color:#8c8c8c;transform:scaleX(1.0157);">datetime</span>
<svg class="i" style="left:964.4px;top:237.8px;" width="13" height="20" viewBox="0 0 13 20"><path d="M6.5 0 L12.9 8 H.1 Z M.1 11.4 H12.9 L6.5 19.2 Z" fill="#c8c8c8"/></svg>
<span class="t " id="t46" style="left:996.4px;top:224.44px;font-size:25px;line-height:33px;color:#f04a4a;">*</span>
<span class="t " id="t47" style="left:1019.2px;top:220.24px;font-size:25px;line-height:33px;color:#d8d8d8;font-weight:700;transform:scaleX(0.8967);">accou</span>
<span class="c" style="left:996.5px;top:247.7px;font-size:25px;line-height:25px;color:#8c8c8c;">账号</span>
<span class="t " id="t48" style="left:1046.8px;top:244.94px;font-size:25px;line-height:33px;color:#8c8c8c;width:38.6px;overflow:hidden;">/var</span>
<svg class="i" style="left:1089.4px;top:237.8px;" width="13" height="20" viewBox="0 0 13 20"><path d="M6.5 0 L12.9 8 H.1 Z M.1 11.4 H12.9 L6.5 19.2 Z" fill="#c8c8c8"/></svg>
<span class="t " id="t49" style="left:1128.9px;top:220.24px;font-size:25px;line-height:33px;color:#d8d8d8;font-weight:700;transform:scaleX(0.8800);">passwo</span>
<span class="c" style="left:1121.2px;top:247.7px;font-size:25px;line-height:25px;color:#8c8c8c;">密码</span>
<span class="t " id="t50" style="left:1171.5px;top:244.94px;font-size:25px;line-height:33px;color:#8c8c8c;width:38.8px;overflow:hidden;">/var</span>
<svg class="i" style="left:1214.6px;top:237.8px;" width="13" height="20" viewBox="0 0 13 20"><path d="M6.5 0 L12.9 8 H.1 Z M.1 11.4 H12.9 L6.5 19.2 Z" fill="#c8c8c8"/></svg>
<div class="r" style="left:492px;top:272.4px;width:1070px;height:41px;background:#1f1f1f;"></div>
<div class="r" style="left:492px;top:272px;width:1px;height:42px;background:#333333;"></div>
<div class="r" style="left:551px;top:272px;width:1px;height:42px;background:#333333;"></div>
<div class="r" style="left:639px;top:272px;width:1px;height:42px;background:#333333;"></div>
<div class="r" style="left:764px;top:272px;width:1px;height:42px;background:#333333;"></div>
<div class="r" style="left:989px;top:272px;width:1px;height:42px;background:#333333;"></div>
<div class="r" style="left:1114px;top:272px;width:1px;height:42px;background:#333333;"></div>
<div class="r" style="left:1238px;top:272px;width:1px;height:42px;background:#333333;"></div>
<div class="r" style="left:492px;top:272px;width:747px;height:1px;background:#333333;"></div>
<div class="r" style="left:492px;top:313px;width:747px;height:1px;background:#333333;"></div>
<div class="r" style="left:511px;top:284px;width:20px;height:20px;background:#333333;border-radius:4.5px"></div>
<svg class="i" style="left:569.4px;top:285.6px;" width="12" height="20" viewBox="0 0 12 20"><path d="M1.2 1 L10.4 9.6 L1.2 18.2" fill="none" stroke="#9c9c9c" stroke-width="1.6"/></svg>
<span class="t " id="t51" style="left:594.6px;top:279.65px;font-size:24.4px;line-height:32px;color:#b8b8b8;">1</span>
<span class="t " id="t52" style="left:650.4px;top:279.65px;font-size:24.4px;line-height:32px;color:#d4d4d4;">1</span>
<span class="t " id="t53" style="left:775.2px;top:279.65px;font-size:24.4px;line-height:32px;color:#d4d4d4;width:212.8px;overflow:hidden;letter-spacing:-.04px">2024-04-15 23:18:26</span>
<span class="t " id="t54" style="left:1000.4px;top:279.65px;font-size:24.4px;line-height:32px;color:#d4d4d4;transform:scaleX(0.9790);">111</span>
<span class="t " id="t55" style="left:1125.6px;top:279.65px;font-size:24.4px;line-height:32px;color:#d4d4d4;transform:scaleX(0.9248);">22</span>
<span class="c" style="left:516.2px;top:658.4px;font-size:13.75px;line-height:13.75px;color:#9d9d9d;">问题</span>
<span class="c" style="left:573.9px;top:658.4px;font-size:13.75px;line-height:13.75px;color:#9d9d9d;">输出</span>
<span class="c" style="left:631.5px;top:658.4px;font-size:13.75px;line-height:13.75px;color:#9d9d9d;">调试控制台</span>
<span class="c" style="left:729.4px;top:658.4px;font-size:13.75px;line-height:13.75px;color:#e7e7e7;">终端</span>
<div class="r" style="left:728.4px;top:679.6px;width:31.4px;height:1.4px;background:#0078d4;"></div>
<span class="c" style="left:787px;top:658.4px;font-size:13.75px;line-height:13.75px;color:#9d9d9d;">端口</span>
<span class="t " id="t56" style="left:845.3px;top:657.43px;font-size:13.2px;line-height:18px;color:#9d9d9d;transform:scaleX(0.8966);">GITLENS</span>
<span class="c" style="left:926px;top:658.4px;font-size:13.75px;line-height:13.75px;color:#9d9d9d;">注释</span>
<span class="t  m" id="t57" style="left:516.2px;top:703.17px;font-size:16.62px;line-height:22px;color:#cccccc;">account :&gt;&gt;  111</span>
<span class="t  m" id="t58" style="left:516.2px;top:726.17px;font-size:16.62px;line-height:22px;color:#cccccc;">password :&gt;&gt;  22</span>
<span class="t  m" id="t59" style="left:516.2px;top:749.17px;font-size:16.62px;line-height:22px;color:#cccccc;">ResultSetHeader {</span>
<span class="t  m" id="t60" style="left:536.14px;top:772.17px;font-size:16.62px;line-height:22px;color:#cccccc;">fieldCount:</span>
<span class="t  m" id="t61" style="left:655.78px;top:772.17px;font-size:16.62px;line-height:22px;color:#e5e510;">0</span>
<span class="t  m" id="t62" style="left:665.75px;top:772.17px;font-size:16.62px;line-height:22px;color:#cccccc;">,</span>
<span class="t  m" id="t63" style="left:536.14px;top:795.17px;font-size:16.62px;line-height:22px;color:#cccccc;">affectedRows:</span>
<span class="t  m" id="t64" style="left:675.72px;top:795.17px;font-size:16.62px;line-height:22px;color:#e5e510;">1</span>
<span class="t  m" id="t65" style="left:685.69px;top:795.17px;font-size:16.62px;line-height:22px;color:#cccccc;">,</span>
<span class="t  m" id="t66" style="left:536.14px;top:818.17px;font-size:16.62px;line-height:22px;color:#cccccc;">insertId:</span>
<span class="t  m" id="t67" style="left:635.84px;top:818.17px;font-size:16.62px;line-height:22px;color:#e5e510;">1</span>
<span class="t  m" id="t68" style="left:645.81px;top:818.17px;font-size:16.62px;line-height:22px;color:#cccccc;">,</span>
<span class="t  m" id="t69" style="left:536.14px;top:841.17px;font-size:16.62px;line-height:22px;color:#cccccc;">info:</span>
<span class="t  m" id="t70" style="left:595.96px;top:841.17px;font-size:16.62px;line-height:22px;color:#0dbc79;">''</span>
<span class="t  m" id="t71" style="left:615.9px;top:841.17px;font-size:16.62px;line-height:22px;color:#cccccc;">,</span>
<span class="t  m" id="t72" style="left:536.14px;top:864.17px;font-size:16.62px;line-height:22px;color:#cccccc;">serverStatus:</span>
<span class="t  m" id="t73" style="left:675.72px;top:864.17px;font-size:16.62px;line-height:22px;color:#e5e510;">2</span>
<span class="t  m" id="t74" style="left:685.69px;top:864.17px;font-size:16.62px;line-height:22px;color:#cccccc;">,</span>
<span class="t  m" id="t75" style="left:536.14px;top:887.17px;font-size:16.62px;line-height:22px;color:#cccccc;">warningStatus:</span>
<span class="t  m" id="t76" style="left:685.69px;top:887.17px;font-size:16.62px;line-height:22px;color:#e5e510;">0</span>
<span class="t  m" id="t77" style="left:695.66px;top:887.17px;font-size:16.62px;line-height:22px;color:#cccccc;">,</span>
<span class="t  m" id="t78" style="left:536.14px;top:910.17px;font-size:16.62px;line-height:22px;color:#cccccc;">changedRows:</span>
<span class="t  m" id="t79" style="left:665.75px;top:910.17px;font-size:16.62px;line-height:22px;color:#e5e510;">0</span>
<span class="t  m" id="t80" style="left:516.2px;top:933.17px;font-size:16.62px;line-height:22px;color:#cccccc;">}</span>
<span class="t  m" id="t81" style="left:516.2px;top:956.17px;font-size:16.62px;line-height:22px;color:#6a6a6a;">undefined</span>
<div class="r" style="left:1556px;top:687px;width:1px;height:287px;background:#2b2b2b;"></div>
<div class="r" style="left:1557px;top:715px;width:5px;height:27px;background:#37373d;"></div>
<div class="r" style="left:1556.5px;top:715px;width:1.6px;height:27px;background:#0078d4;"></div>
</body></html>
